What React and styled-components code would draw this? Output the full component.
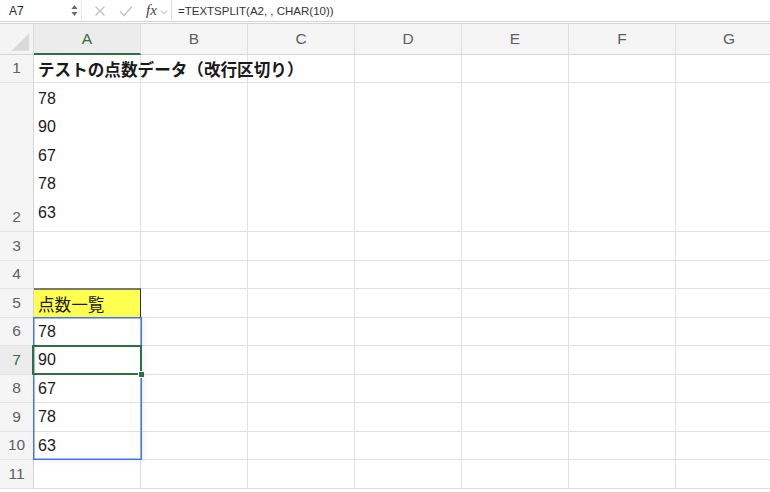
import styled, { createGlobalStyle } from "styled-components";

const GlobalStyle = createGlobalStyle`
  html, body {
    margin: 0;
    padding: 0;
    background: #fff;
    overflow: hidden;
  }
  * { box-sizing: border-box; }
`;

const columns = ["A", "B", "C", "D", "E", "F", "G"];
const activeCol = "A";
const activeRow = 7;

// 行の定義 (A列の内容)
const rows = [
  { n: 1, a: "テストの点数データ（改行区切り）", bold: true, jp: true },
  { n: 2, lines: ["78", "90", "67", "78", "63"] },
  { n: 3 },
  { n: 4 },
  { n: 5, a: "点数一覧", yellow: true, jp: true },
  { n: 6, a: "78" },
  { n: 7, a: "90" },
  { n: 8, a: "67" },
  { n: 9, a: "78" },
  { n: 10, a: "63" },
  { n: 11 },
];

const App = () => {
  return (
    <Page>
      <GlobalStyle />
      <FormulaBar>
        <NameBox>
          <span>A7</span>
          <Spinner>
            <svg width="7" height="13" viewBox="0 0 7 13">
              <path d="M3.5 1 L6.5 5 H0.5 Z" fill="#6b6b6b" />
              <path d="M3.5 12 L6.5 8 H0.5 Z" fill="#6b6b6b" />
            </svg>
          </Spinner>
        </NameBox>
        <Tools>
          <svg width="12" height="12" viewBox="0 0 12 12">
            <path d="M1.5 1.5 L10.5 10.5 M10.5 1.5 L1.5 10.5" stroke="#c2c2c2" strokeWidth="1.4" />
          </svg>
          <svg width="14" height="12" viewBox="0 0 14 12">
            <path d="M1 6.5 L5 10.5 L13 1.5" stroke="#c2c2c2" strokeWidth="1.4" fill="none" />
          </svg>
          <Fx>
            fx
            <svg width="8" height="6" viewBox="0 0 8 6">
              <path d="M1 1.5 L4 4.5 L7 1.5" stroke="#a8a8a8" strokeWidth="1" fill="none" />
            </svg>
          </Fx>
        </Tools>
        <Formula>=TEXTSPLIT(A2, , CHAR(10))</Formula>
      </FormulaBar>
      <Sheet>
        <Corner>
          <svg width="34" height="31" viewBox="0 0 34 31">
            <path d="M30 9 L30 27 L12 27 Z" fill="#d9d9d9" />
          </svg>
        </Corner>
        {columns.map((c, i) => (
          <ColHead key={c} $col={i + 2} $active={c === activeCol}>
            {c}
          </ColHead>
        ))}
        {rows.map((r) => (
          <Row key={r.n} r={r} />
        ))}
        <RangeBox />
        <SelectBox>
          <Handle />
        </SelectBox>
      </Sheet>
    </Page>
  );
};

const Row = ({ r }) => (
  <>
    <RowHead $row={r.n + 1} $active={r.n === activeRow}>
      {r.n}
    </RowHead>
    {columns.map((c, i) => (
      <Cell
        key={c}
        $row={r.n + 1}
        $col={i + 2}
        $bold={c === "A" && r.bold}
        $jp={c === "A" && r.jp}
        $yellow={c === "A" && r.yellow}
        $multi={c === "A" && !!r.lines}
      >
        {c === "A" && r.lines
          ? r.lines.map((l, j) => <Line key={j}>{l}</Line>)
          : c === "A"
          ? r.a
          : null}
      </Cell>
    ))}
  </>
);

export default App;

//styled
const Page = styled.div`
  width: 770px;
  height: 492px;
  overflow: hidden;
  font-family: "Liberation Sans", "Noto Sans CJK JP", sans-serif;
  color: #1a1a1a;
`;

const FormulaBar = styled.div`
  display: flex;
  align-items: center;
  height: 24px;
  border-bottom: 3px double #d4d4d4;
  background: #fff;
  font-size: 12px;
`;

const NameBox = styled.div`
  display: flex;
  align-items: center;
  justify-content: space-between;
  width: 82px;
  height: 100%;
  padding: 0 2px 0 9px;
  border-right: 1px solid #e6e6e6;
  color: #222;
`;

const Spinner = styled.div`
  display: flex;
  align-items: center;
  margin-right: 1px;
`;

const Tools = styled.div`
  display: flex;
  align-items: center;
  gap: 13px;
  padding-left: 12px;
  width: 90px;
  height: 100%;
  border-right: 1px solid #e0e0e0;
`;

const Fx = styled.span`
  display: flex;
  align-items: center;
  gap: 3px;
  font-family: "Liberation Serif", "DejaVu Serif", serif;
  font-style: italic;
  font-size: 15px;
  color: #444;
  svg {
    margin-top: 2px;
  }
`;

const Formula = styled.div`
  padding-left: 6px;
  font-size: 11.5px;
  color: #333;
`;

const Sheet = styled.div`
  display: grid;
  grid-template-columns: 34px repeat(7, 107px);
  grid-template-rows: 31px 28px 149px repeat(9, 28.5px);
`;

const Corner = styled.div`
  grid-row: 1;
  grid-column: 1;
  background: #f4f4f4;
  border-right: 1px solid #dcdcdc;
  border-bottom: 1px solid #d6d6d6;
  display: flex;
`;

const ColHead = styled.div`
  grid-row: 1;
  grid-column: ${(p) => p.$col};
  display: flex;
  align-items: center;
  justify-content: center;
  font-size: 15.5px;
  background: ${(p) => (p.$active ? "#ececec" : "#f5f5f5")};
  color: ${(p) => (p.$active ? "#2e6f44" : "#5f5f5f")};
  border-right: 1px solid #e0e0e0;
  border-bottom: ${(p) => (p.$active ? "2px solid #2e6f44" : "1px solid #d6d6d6")};
`;

const RowHead = styled.div`
  grid-row: ${(p) => p.$row};
  grid-column: 1;
  display: flex;
  align-items: flex-end;
  justify-content: center;
  padding-bottom: 5px;
  font-size: 15.5px;
  background: ${(p) => (p.$active ? "#ececec" : "#f5f5f5")};
  color: ${(p) => (p.$active ? "#2e6f44" : "#616161")};
  border-right: 1px solid #d4d4d4;
  border-bottom: 1px solid #e2e2e2;
`;

const Cell = styled.div`
  grid-row: ${(p) => p.$row};
  grid-column: ${(p) => p.$col};
  display: flex;
  flex-direction: column;
  justify-content: ${(p) => (p.$multi ? "flex-end" : "center")};
  padding: ${(p) => (p.$multi ? "0 4px 4px" : "1px 4px 0")};
  font-size: ${(p) => (p.$jp ? "16.6px" : "16px")};
  font-weight: ${(p) => (p.$bold ? 700 : 400)};
  white-space: nowrap;
  background: ${(p) => (p.$yellow ? "#ffff4f" : "transparent")};
  border-right: 1px solid ${(p) => (p.$yellow ? "#2a2a2a" : "#e0e0e0")};
  border-bottom: 1px solid #e0e0e0;
  border-top: ${(p) => (p.$yellow ? "2px solid #7a7a6a" : "none")};
  margin-top: ${(p) => (p.$yellow ? "-1px" : "0")};
  position: relative;
  z-index: ${(p) => (p.$bold ? 1 : 0)};
`;

const Line = styled.div`
  line-height: 28.5px;
`;

const RangeBox = styled.div`
  grid-column: 2;
  grid-row: 7 / 12;
  position: relative;
  margin: -1px -1px 0 -1px;
  box-shadow: inset 0 0 0 1.5px #4575e8, 2px 2px 5px rgba(60, 80, 140, 0.08);
  pointer-events: none;
  z-index: 4;
`;

const SelectBox = styled.div`
  grid-column: 2;
  grid-row: 8;
  position: relative;
  margin: -1px -1px 0 -2px;
  border: 2px solid #2e6f44;
  pointer-events: none;
  z-index: 5;
`;

const Handle = styled.div`
  position: absolute;
  right: -5px;
  bottom: -5px;
  width: 7px;
  height: 7px;
  background: #2e6f44;
  border: 1px solid #fff;
`;
